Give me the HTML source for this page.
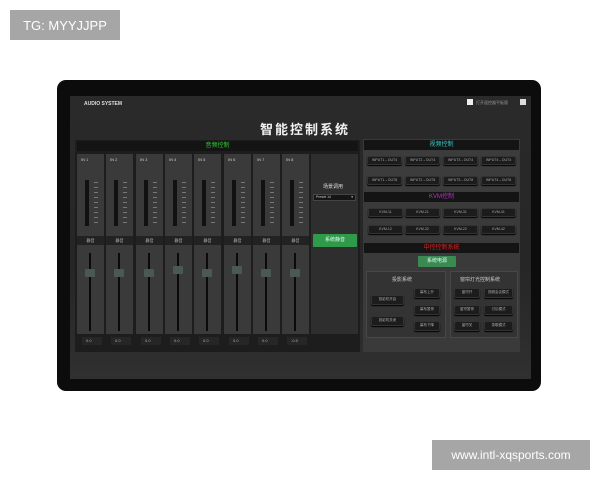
<!DOCTYPE html>
<html><head><meta charset="utf-8"><style>
*{margin:0;padding:0;box-sizing:border-box}
body{width:600px;height:480px;background:#fff;position:relative;overflow:hidden;font-family:"Liberation Sans","Noto Sans CJK SC",sans-serif}
.a{position:absolute}
.tag{background:#a6a6a6;color:#fff;font-size:13px;display:flex;align-items:center;justify-content:center}
.mon{left:57px;top:80px;width:484px;height:311px;background:#0c0c0c;border-radius:9px}
.scr{left:70px;top:96px;width:461px;height:283px;background:linear-gradient(#2a2a2a,#262626 60%,#303030)}
.hdr{height:10px;background:#141414;color:#3c3;font-size:6px;text-align:center;line-height:10px}
.strip{position:absolute;top:154px;width:27px;height:180px;background:#3a3a3a}
.lbl{position:absolute;left:4px;top:3px;font-size:4px;color:#ccc}
.meter{position:absolute;left:8px;top:26px;width:4px;height:46px;background:#111}
.mute{position:absolute;left:0;top:82px;width:27px;height:9px;background:#222;color:#bbb;font-size:4px;text-align:center;line-height:9px}
.trk{position:absolute;left:12px;top:99px;width:2px;height:78px;background:#0a0a0a}
.knob{position:absolute;left:8px;top:115px;width:10px;height:8px;background:#4a5a52;border-radius:1px}
.tick{position:absolute;left:17px;top:28px;width:4px;height:44px;background:repeating-linear-gradient(#777 0 1px,transparent 1px 5px)}
.val{position:absolute;top:337px;width:20px;height:8px;background:#262626;color:#aaa;font-size:4px;line-height:8px;padding-left:4px}
.btn{position:absolute;height:9px;background:#1c1c1c;border:1px solid #333;border-radius:2px;color:#aaa;font-size:3.5px;text-align:center;line-height:7px;box-shadow:0 1px 1px #000}
.gb{background:#2f9a4a;color:#dfe;text-align:center;border-radius:1px}
</style></head><body>
<div class="a tag" style="left:10px;top:10px;width:110px;height:30px">TG: MYYJJPP</div>
<div class="a tag" style="left:432px;top:440px;width:158px;height:30px;font-size:12px">www.intl-xqsports.com</div>
<div class="a mon"></div>
<div class="a scr"></div>
<div class="a" style="left:84px;top:101px;color:#ddd;font-size:5px;font-weight:bold">AUDIO SYSTEM</div>
<div class="a" style="left:467px;top:99px;width:6px;height:6px;background:#eee"></div>
<div class="a" style="left:476px;top:100px;color:#999;font-size:4px">打开遥控器平板版</div>
<div class="a" style="left:520px;top:99px;width:6px;height:6px;background:#ddd"></div>
<div class="a" style="left:260px;top:119px;color:#f2f2f2;font-size:13px;font-weight:bold;letter-spacing:2px">智能控制系统</div>
<!-- left panel -->
<div class="a" style="left:75px;top:140px;width:285px;height:212px;background:#1d1d1d"></div>
<div class="a hdr" style="left:77px;top:141px;width:281px">音频控制</div>
<div class="strip" style="left:77px"><div class="lbl">IN 1</div><div class="meter"></div><div class="tick"></div><div class="mute">静音</div><div class="trk"></div><div class="knob"></div></div>
<div class="strip" style="left:106px"><div class="lbl">IN 2</div><div class="meter"></div><div class="tick"></div><div class="mute">静音</div><div class="trk"></div><div class="knob"></div></div>
<div class="strip" style="left:136px"><div class="lbl">IN 3</div><div class="meter"></div><div class="tick"></div><div class="mute">静音</div><div class="trk"></div><div class="knob"></div></div>
<div class="strip" style="left:165px"><div class="lbl">IN 4</div><div class="meter"></div><div class="tick"></div><div class="mute">静音</div><div class="trk"></div><div class="knob" style="top:112px"></div></div>
<div class="strip" style="left:194px"><div class="lbl">IN 5</div><div class="meter"></div><div class="tick"></div><div class="mute">静音</div><div class="trk"></div><div class="knob"></div></div>
<div class="strip" style="left:224px"><div class="lbl">IN 6</div><div class="meter"></div><div class="tick"></div><div class="mute">静音</div><div class="trk"></div><div class="knob" style="top:112px"></div></div>
<div class="strip" style="left:253px"><div class="lbl">IN 7</div><div class="meter"></div><div class="tick"></div><div class="mute">静音</div><div class="trk"></div><div class="knob"></div></div>
<div class="strip" style="left:282px"><div class="lbl">IN 8</div><div class="meter"></div><div class="tick"></div><div class="mute">静音</div><div class="trk"></div><div class="knob"></div></div>
<div class="a" style="left:311px;top:154px;width:47px;height:180px;background:#2e2e2e"></div>
<div class="a" style="left:75px;top:335px;width:285px;height:17px;background:#1d1d1d"></div>
<div class="val" style="left:82px">0.0</div><div class="val" style="left:111px">0.0</div><div class="val" style="left:141px">0.0</div><div class="val" style="left:170px">0.0</div><div class="val" style="left:199px">0.0</div><div class="val" style="left:229px">0.0</div><div class="val" style="left:258px">0.0</div><div class="val" style="left:287px">-0.5</div>
<div class="a" style="left:323px;top:183px;color:#ddd;font-size:5px">场景调用</div>
<div class="a" style="left:313px;top:194px;width:43px;height:7px;background:#151515;border:1px solid #444;color:#ccc;font-size:3.5px;line-height:5px;padding-left:2px">Preset 14 <span style="float:right;padding-right:2px">▾</span></div>
<div class="a gb" style="left:313px;top:234px;width:44px;height:13px;font-size:5px;line-height:13px">系统静音</div>
<!-- right panel -->
<div class="a" style="left:363px;top:139px;width:157px;height:213px;background:#3a3a3a"></div>
<div class="a hdr" style="left:364px;top:140px;width:155px;color:#3cc">视频控制</div>
<div class="a" style="left:364px;top:151px;width:155px;height:40px;background:#3c3c3c"></div>
<div class="btn" style="left:367px;top:156px;width:35px">INPUT1→OUT4</div><div class="btn" style="left:405px;top:156px;width:35px">INPUT2→OUT4</div><div class="btn" style="left:443px;top:156px;width:35px">INPUT3→OUT4</div><div class="btn" style="left:481px;top:156px;width:35px">INPUT4→OUT4</div>
<div class="btn" style="left:367px;top:176px;width:35px">INPUT1→OUT8</div><div class="btn" style="left:405px;top:176px;width:35px">INPUT2→OUT8</div><div class="btn" style="left:443px;top:176px;width:35px">INPUT3→OUT8</div><div class="btn" style="left:481px;top:176px;width:35px">INPUT4→OUT8</div>
<div class="a hdr" style="left:364px;top:192px;width:155px;color:#b3c">KVM控制</div>
<div class="btn" style="left:368px;top:208px;width:35px">KVM-11</div><div class="btn" style="left:405px;top:208px;width:35px">KVM-21</div><div class="btn" style="left:443px;top:208px;width:35px">KVM-31</div><div class="btn" style="left:481px;top:208px;width:35px">KVM-41</div>
<div class="btn" style="left:368px;top:225px;width:35px">KVM-12</div><div class="btn" style="left:405px;top:225px;width:35px">KVM-32</div><div class="btn" style="left:443px;top:225px;width:35px">KVM-22</div><div class="btn" style="left:481px;top:225px;width:35px">KVM-42</div>
<div class="a hdr" style="left:364px;top:243px;width:155px;color:#d22">中控控制系统</div>
<div class="a gb" style="left:418px;top:256px;width:38px;height:11px;font-size:5px;line-height:11px;background:#3a8a52">系统电源</div>
<div class="a" style="left:366px;top:271px;width:80px;height:67px;background:#333;border:1px solid #474747"></div>
<div class="a" style="left:450px;top:271px;width:68px;height:67px;background:#333;border:1px solid #474747"></div>
<div class="a" style="left:392px;top:276px;color:#ccc;font-size:5px">投影系统</div>
<div class="a" style="left:460px;top:276px;color:#ccc;font-size:5px">窗帘灯光控制系统</div>
<div class="btn" style="left:371px;top:295px;width:33px;height:10px">投影机开启</div>
<div class="btn" style="left:371px;top:316px;width:33px;height:10px">投影机关闭</div>
<div class="btn" style="left:414px;top:288px;width:26px;height:10px">幕布上升</div>
<div class="btn" style="left:414px;top:305px;width:26px;height:10px">幕布暂停</div>
<div class="btn" style="left:414px;top:321px;width:26px;height:10px">幕布下降</div>
<div class="btn" style="left:454px;top:288px;width:26px;height:10px">窗帘开</div>
<div class="btn" style="left:484px;top:288px;width:29px;height:10px">视频会议模式</div>
<div class="btn" style="left:454px;top:305px;width:26px;height:10px">窗帘暂停</div>
<div class="btn" style="left:484px;top:305px;width:29px;height:10px">讨论模式</div>
<div class="btn" style="left:454px;top:321px;width:26px;height:10px">窗帘关</div>
<div class="btn" style="left:484px;top:321px;width:29px;height:10px">茶歇模式</div>
</body></html>
